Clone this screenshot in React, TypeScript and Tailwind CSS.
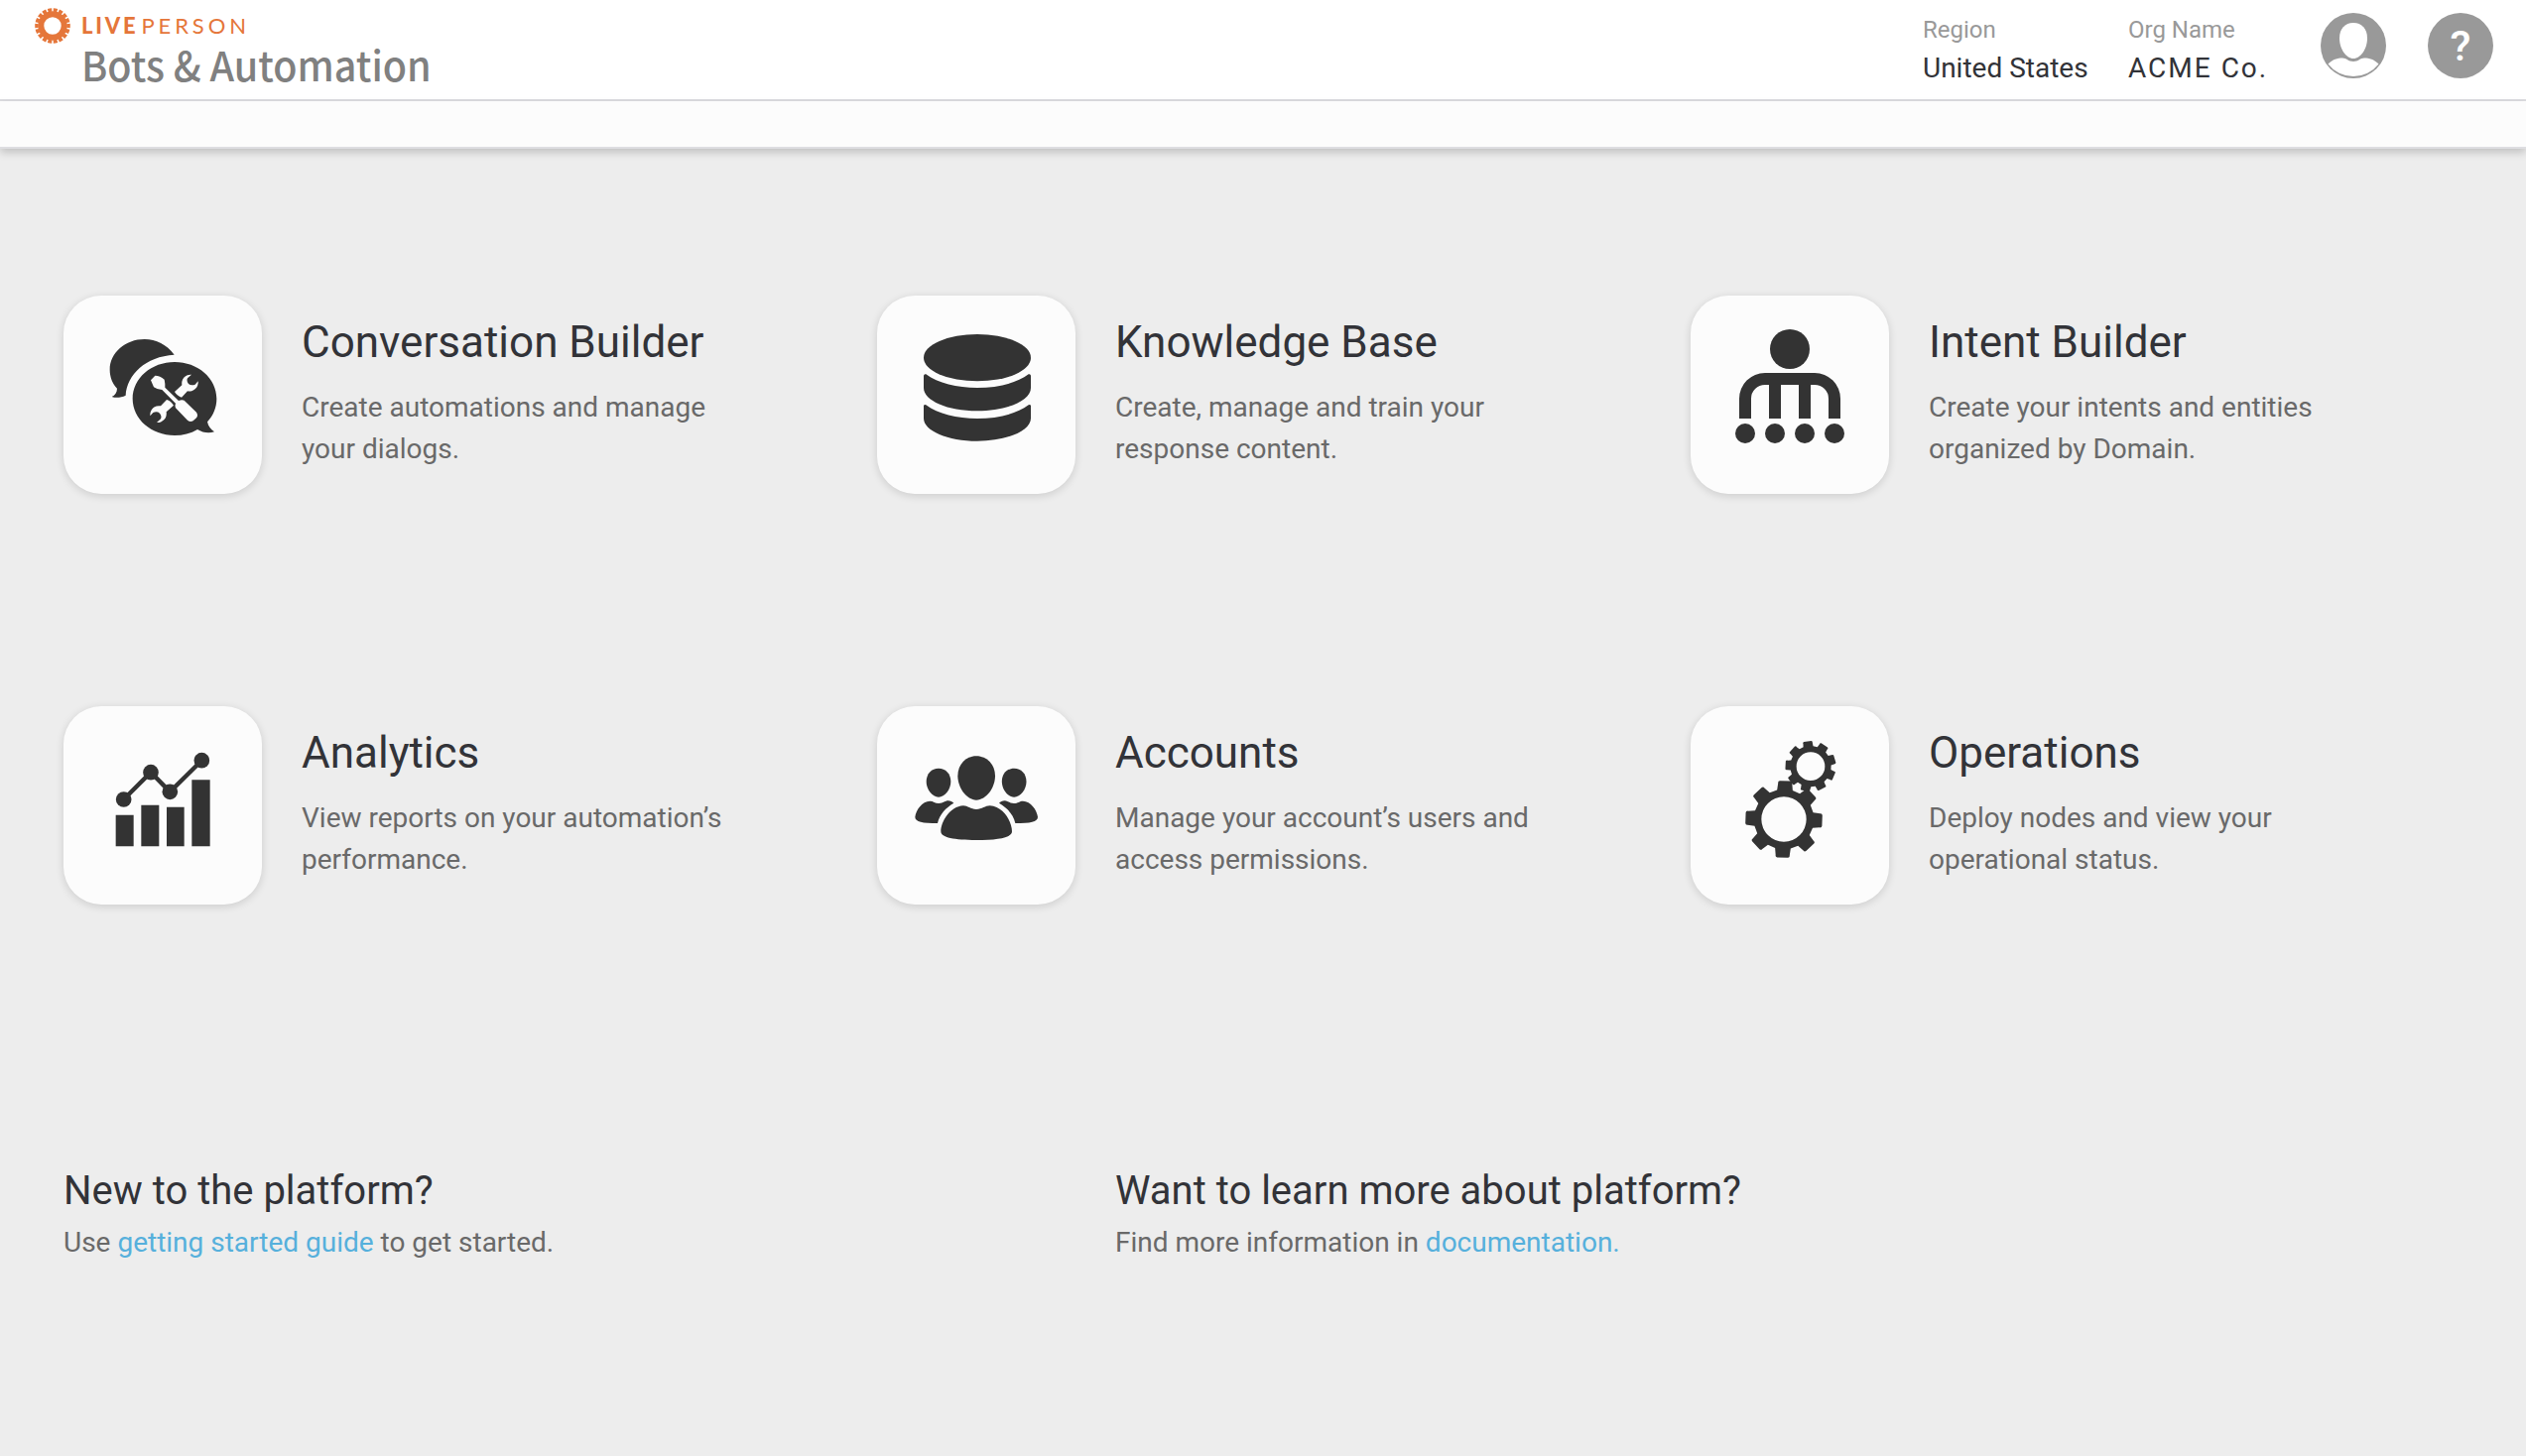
import React from "react";

const INK = "#333333";

// Closed gear outline with rounded-off rectangular teeth and a circular bore.
function gearPath(cx: number, cy: number, outer: number, root: number, bore: number, teeth: number, start: number, tip: number, base: number) {
  const pt = (r: number, deg: number) => {
    const a = (deg * Math.PI) / 180;
    return `${(cx + r * Math.cos(a)).toFixed(2)} ${(cy + r * Math.sin(a)).toFixed(2)}`;
  };
  let d = "";
  for (let i = 0; i < teeth; i++) {
    const c = start + (i * 360) / teeth;
    d += `${i === 0 ? "M" : "L"}${pt(root, c - base)}L${pt(outer - 6, c - tip)}Q${pt(outer, c - tip)} ${pt(outer, c - tip + 3)}L${pt(outer, c + tip - 3)}Q${pt(outer, c + tip)} ${pt(outer - 6, c + tip)}L${pt(root, c + base)}`;
  }
  return `${d}ZM${cx + bore} ${cy}A${bore} ${bore} 0 1 0 ${cx - bore} ${cy}A${bore} ${bore} 0 1 0 ${cx + bore} ${cy}Z`;
}

function ConversationIcon() {
  const wrench = "M429 293A27 27 0 0 0 400 325L378 345Q386 358 399 362L417 343A27 27 0 0 0 449 313L440 323Q428 328 420 321Q413 312 417 304Z";
  return (
    <svg viewBox="42 54 600 600" className="size-full" fill={INK}>
      <path d="M377 233C354 202 322 186 287 186C229 186 182 227 182 278C182 300 190 320 204 335C204 347 198 355 188 360C202 365 217 362 230 356C234 293 290 238 377 233Z" />
      <path d="M378 255C448 255 505 304 505 366C505 393 495 416 477 436C480 450 487 458 498 466C480 472 462 468 447 459C427 471 403 477 378 477C308 477 251 428 251 366C251 304 308 255 378 255Z" />
      <g fill="#fcfcfc">
        <path d="M306 310L319 296Q334 296 347 308Q350 322 349 332L390 372Q400 368 407 371L444 407Q450 416 444 424L434 433Q425 438 417 431L381 394Q378 386 381 380L340 339Q326 339 315 331Q311 322 306 310Z" />
        <path d={wrench} />
        <path d={wrench} transform="rotate(180 376.5 365.5)" />
      </g>
    </svg>
  );
}

function DatabaseIcon() {
  return (
    <svg viewBox="42 54 600 600" className="size-full" fill={INK}>
      <ellipse cx="345" cy="242" rx="162" ry="71" />
      <path d="M183 296Q184 290 190 292C226 319 284 333 345 333C406 333 464 319 500 292Q506 290 507 296V333C507 372 434 403 345 403C256 403 183 372 183 333Z" />
      <path d="M183 388Q184 382 190 385C226 412 284 426 345 426C406 426 464 412 500 385Q506 382 507 388V425C507 463 434 494 345 494C256 494 183 463 183 425Z" />
    </svg>
  );
}

function IntentIcon() {
  return (
    <svg viewBox="42 54 600 600" className="size-full" fill={INK}>
      <circle cx="342" cy="216" r="60" />
      <path d="M189 426V366A78 78 0 0 1 267 288H417A78 78 0 0 1 495 366V426H459V366A42 42 0 0 0 417 324H405V426H369V324H315V426H279V324H267A42 42 0 0 0 225 366V426Z" />
      <circle cx="207" cy="471" r="30" />
      <circle cx="297" cy="471" r="30" />
      <circle cx="387" cy="471" r="30" />
      <circle cx="477" cy="471" r="30" />
    </svg>
  );
}

function AnalyticsIcon() {
  return (
    <svg viewBox="42 51 600 600" className="size-full" fill={INK}>
      <path d="M200 380H254V475H200ZM277 350H331V475H277ZM354 356H407V475H354ZM430 274H485V475H430Z" />
      <path d="M224 333L306 251L364 310L460 215" fill="none" stroke={INK} strokeWidth="13" />
      <circle cx="224" cy="333" r="23.5" />
      <circle cx="306" cy="251" r="23.5" />
      <circle cx="364" cy="310" r="23.5" />
      <circle cx="460" cy="215" r="23.5" />
    </svg>
  );
}

function AccountsIcon() {
  return (
    <svg viewBox="42 51 600 600" className="size-full" fill={INK}>
      <path d="M342 202C375 202 399 228 399 262C399 298 372 335 342 335C313 335 286 298 286 262C286 228 310 202 342 202Z" />
      <path d="M303 352C316 352 325 363 342 363C360 363 369 352 383 352C425 354 450 402 450 430C450 449 408 456 342 456C276 456 235 449 235 430C235 402 262 354 303 352Z" />
      <path d="M228 239C249 239 265 255 265 279C265 303 247 326 228 326C209 326 191 303 191 279C191 255 207 239 228 239Z" />
      <path d="M202 338C212 338 217 345 229 345C242 345 248 337 257 337C264 337 270 341 274 344C250 358 231 378 225 405C180 405 157 401 157 386C160 364 178 339 202 338Z" />
      <path d="M456.500 239C435.500 239 419.500 255 419.500 279C419.500 303 437.500 326 456.500 326C475.500 326 493.500 303 493.500 279C493.500 255 477.500 239 456.500 239Z" />
      <path d="M483 338C473 338 468 345 456 345C443 345 437 337 428 337C421 337 415 341 411 344C435 358 454 378 460 405C505 405 528 401 528 386C525 364 507 339 483 338Z" />
    </svg>
  );
}

function OperationsIcon() {
  return (
    <svg viewBox="42 51 600 600" className="size-full" fill={INK} fillRule="evenodd">
      <path d={gearPath(405, 233, 77, 62, 43, 9, -17, 11.5, 14)} />
      <path d={gearPath(324, 393, 117, 91, 68, 8, 2, 11, 15)} />
    </svg>
  );
}

function LogoMark() {
  return (
    <svg viewBox="0 0 36 36" className="size-[36px] shrink-0">
      <circle cx="18" cy="18" r="11.700" fill="none" stroke="#e5763a" strokeWidth="6" />
      <circle cx="18" cy="18" r="16" fill="none" stroke="#e5763a" strokeWidth="3.600" pathLength="180" strokeDasharray="7.200 2.800" strokeDashoffset="3.600" />
    </svg>
  );
}

function UserIcon() {
  return (
    <svg viewBox="0 0 66 66" className="size-[66px]">
      <circle cx="33" cy="33" r="33" fill="#999999" />
      <path d="M33 10C41.500 10 47 16 47 25.500C47 36 40.500 46 33 46C25.500 46 19 36 19 25.500C19 16 24.500 10 33 10Z" fill="#fff" />
      <path d="M7.500 51.500C12 47 17 45.500 22 45.500C26 45.500 28 49 33 49C38 49 40 45.500 44 45.500C49 45.500 54 47 58.500 51.500A32.200 32.200 0 0 1 7.500 51.500Z" fill="#fff" />
    </svg>
  );
}

const tools = [
  { title: "Conversation Builder", lines: ["Create automations and manage", "your dialogs."], Icon: ConversationIcon },
  { title: "Knowledge Base", lines: ["Create, manage and train your", "response content."], Icon: DatabaseIcon },
  { title: "Intent Builder", lines: ["Create your intents and entities", "organized by Domain."], Icon: IntentIcon },
  { title: "Analytics", lines: ["View reports on your automation’s", "performance."], Icon: AnalyticsIcon },
  { title: "Accounts", lines: ["Manage your account’s users and", "access permissions."], Icon: AccountsIcon },
  { title: "Operations", lines: ["Deploy nodes and view your", "operational status."], Icon: OperationsIcon },
];

export default function App() {
  return (
    <div className="flex h-[1468px] w-[2546px] flex-col overflow-hidden bg-[#ededed] font-['Roboto',sans-serif] text-[#323338]">
      <header className="flex h-[102px] shrink-0 items-start border-b-2 border-[#dcdce0] bg-white pl-[35px] pr-[33px]">
        <div className="flex pt-[8px]">
          <LogoMark />
          <div className="ml-[11px] whitespace-nowrap">
            <div className="mt-[6px] h-[24px] font-['Lato',sans-serif] text-[22px] leading-[24px] text-[#e5763a]">
              <span className="font-black tracking-[2.8px]">LIVE</span>
              <span className="ml-[3px] tracking-[3.9px]">PERSON</span>
            </div>
            <div className="mt-[-1px] font-['Noto_Sans_CJK_SC',sans-serif] text-[41px] font-medium leading-[54px] text-[#808080]">
              <span className="inline-block origin-left scale-x-[0.963]">Bots &amp; Automation</span>
            </div>
          </div>
        </div>
        <div className="ml-auto flex items-start whitespace-nowrap">
          <div className="w-[207px] pt-[14px]">
            <div className="text-[24px] leading-[32px] text-[#999999]">Region</div>
            <div className="mt-[4px] text-[28px] leading-[38px]">United States</div>
          </div>
          <div className="w-[194px] pt-[14px]">
            <div className="text-[24px] leading-[32px] text-[#999999]">Org Name</div>
            <div className="mt-[4px] text-[28px] leading-[38px] tracking-[2px]">ACME Co.</div>
          </div>
          <div className="mt-[13px]"><UserIcon /></div>
          <div className="ml-[42px] mt-[13px] flex size-[66px] items-center justify-center rounded-full bg-[#999999] text-[43px] font-medium text-white">?</div>
        </div>
      </header>
      <div className="h-[48px] shrink-0 border-b-2 border-[#dedee1] bg-[#fcfcfc] shadow-[0_4px_8px_rgba(0,0,0,0.18)]" />
      <main className="px-[64px] pt-[148px]">
        <div className="grid grid-cols-[820px_820px_1fr] gap-y-[214px]">
          {tools.map(({ title, lines, Icon }) => (
            <section key={title} className="flex h-[200px]">
              <div className="size-[200px] shrink-0 rounded-[38px] bg-[#fcfcfc] shadow-[0_2px_8px_rgba(0,0,0,0.14)]">
                <Icon />
              </div>
              <div className="ml-[40px] whitespace-nowrap pt-[20px]">
                <h2 className="text-[44px] leading-[54px]">{title}</h2>
                <p className="mt-[17.5px] text-[28px] leading-[42px] text-[#696969]">
                  {lines[0]}
                  <br />
                  {lines[1]}
                </p>
              </div>
            </section>
          ))}
        </div>
        <div className="mt-[261.5px] grid grid-cols-[1060px_1fr]">
          <div>
            <h3 className="text-[40px] leading-[54px]">New to the platform?</h3>
            <p className="mt-[4px] text-[28px] leading-[42px] text-[#696969]">
              Use <a className="text-[#56b0dc]">getting started guide</a> to get started.
            </p>
          </div>
          <div>
            <h3 className="text-[40px] leading-[54px]">Want to learn more about platform?</h3>
            <p className="mt-[4px] text-[28px] leading-[42px] text-[#696969]">
              Find more information in <a className="text-[#56b0dc]">documentation.</a>
            </p>
          </div>
        </div>
      </main>
    </div>
  );
}
